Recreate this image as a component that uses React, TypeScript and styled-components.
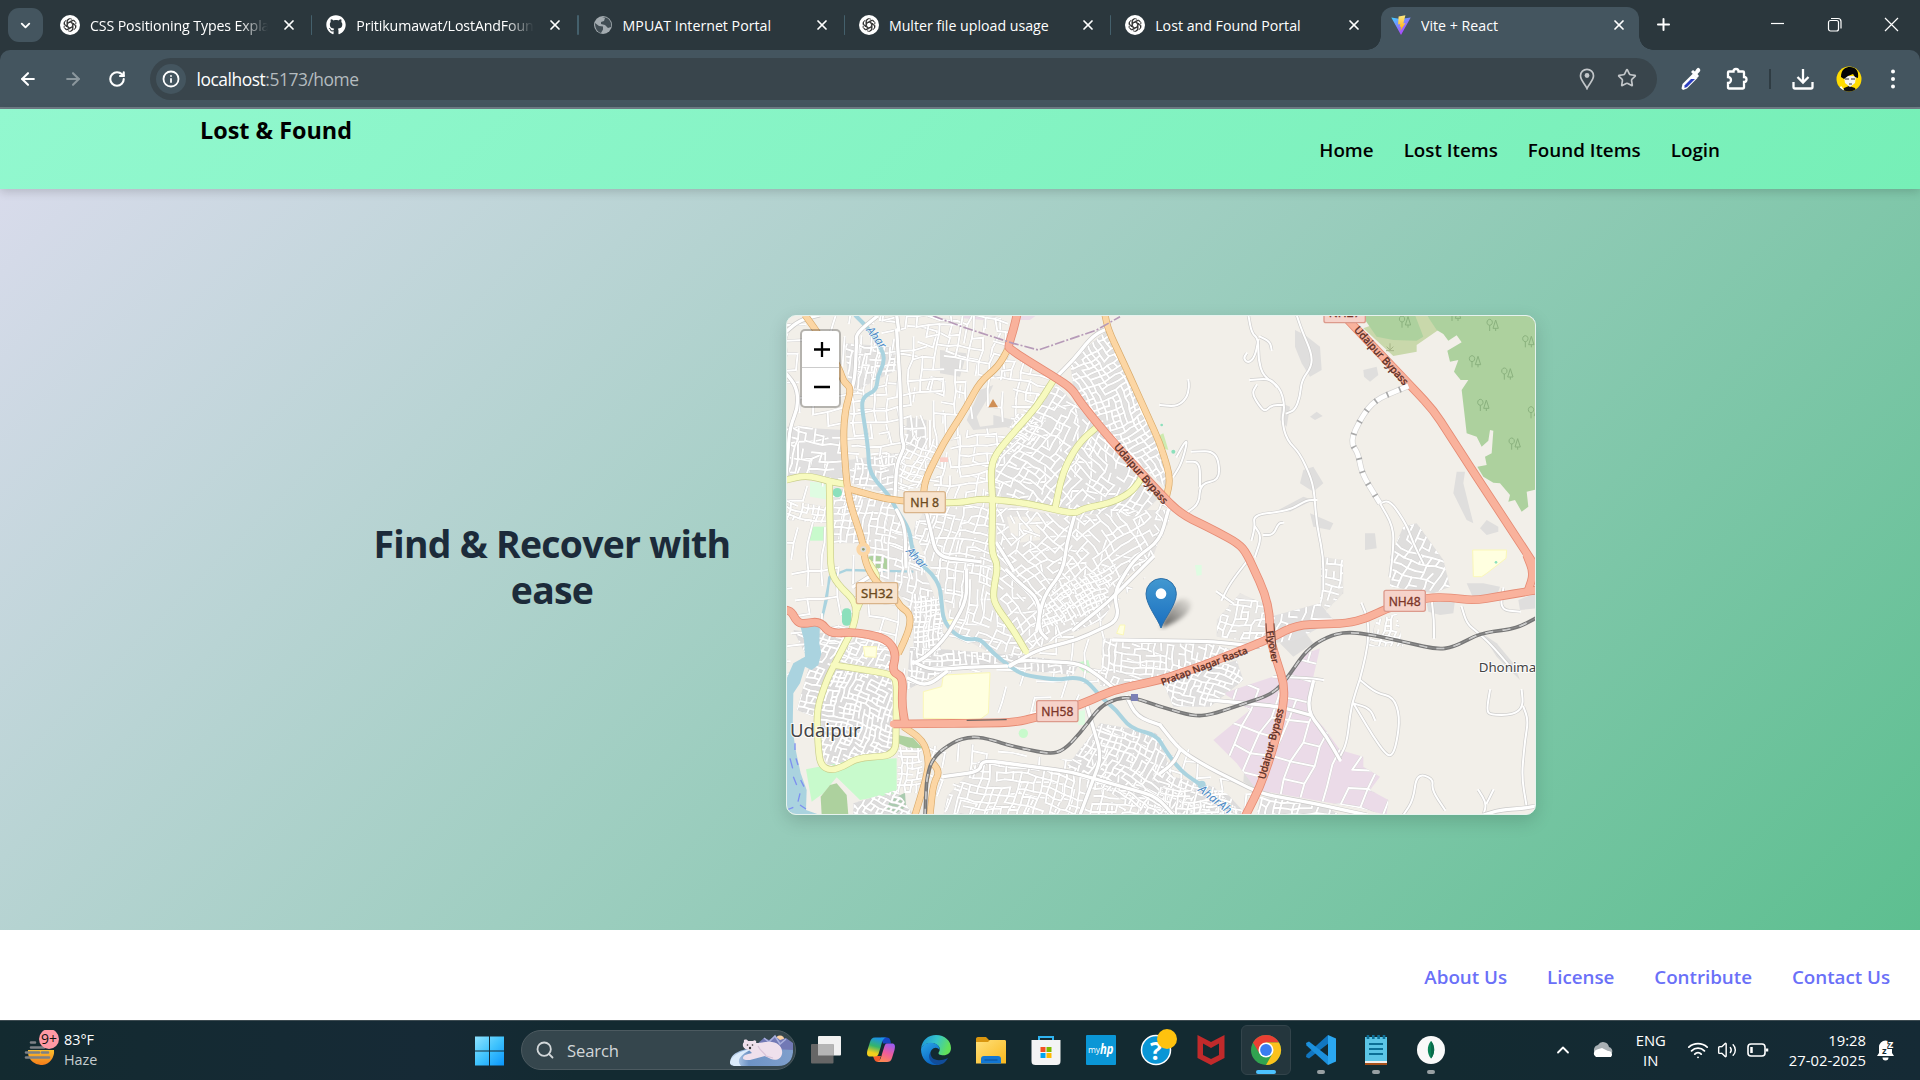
import React from "react";
import styled, { createGlobalStyle } from "styled-components";
import { FaGithub } from "react-icons/fa";
import {
  ArrowLeft, ArrowRight, RotateCw, Info, ChevronDown, ChevronUp, X, Plus, Star, Search, Wifi, Volume2,
} from "lucide-react";

const ui = `"Open Sans", "Noto Sans", sans-serif`;

const GlobalStyle = createGlobalStyle`
  * { box-sizing: border-box; }
  body { margin: 0; font-family: ${ui}; overflow: hidden; background: #fff; }
`;

const Screen = styled.div`
  width: 1920px;
  height: 1080px;
  display: flex;
  flex-direction: column;
  overflow: hidden;
`;

/* ---------- Browser chrome ---------- */

const TabStrip = styled.div`
  height: 50px;
  flex: none;
  background: #2b373d;
  display: flex;
  padding-left: 8px;
  color: #fff;
`;

const TabSearch = styled.div`
  width: 35px;
  height: 34px;
  margin: 8px 3px 0 0;
  border-radius: 11px;
  background: #44555f;
  display: grid;
  place-items: center;
`;

const TabBox = styled.div<{ $active?: boolean }>`
  position: relative;
  width: ${(p) => (p.$active ? 258 : 266.3)}px;
  margin: ${(p) => (p.$active ? "7px 0 0 3.5px" : "7px 0 0")};
  padding: 0 0 7px ${(p) => (p.$active ? 10 : 14)}px;
  flex: none;
  display: flex;
  align-items: center;
  background: ${(p) => (p.$active ? "#44555f" : "transparent")};
  border-radius: 12px 12px 0 0;
  ${(p) =>
    p.$active &&
    `&::before, &::after {
      content: ""; position: absolute; bottom: 0; width: 14px; height: 14px;
    }
    &::before { left: -14px; background: radial-gradient(circle at 0 0, transparent 13.5px, #44555f 14px); }
    &::after { right: -14px; background: radial-gradient(circle at 100% 0, transparent 13.5px, #44555f 14px); }`}
`;

const TabIcon = styled.div`
  width: 20px;
  height: 20px;
  flex: none;
  display: grid;
`;

const TabTitle = styled.div<{ $fade?: boolean; $narrow?: boolean }>`
  width: ${(p) => (p.$narrow ? 177 : 178)}px;
  flex: none;
  margin-left: 10px;
  font-size: 14.2px;
  letter-spacing: ${(p) => (p.$fade ? -0.12 : 0)}px;
  white-space: nowrap;
  overflow: hidden;
  ${(p) => p.$fade && "mask-image: linear-gradient(90deg, #000 84%, transparent);"}
`;

const TabClose = styled.div`
  width: 16px;
  height: 16px;
  flex: none;
  margin-left: 13px;
  display: grid;
`;

const TabDivider = styled.div<{ $hidden?: boolean }>`
  width: 2.5px;
  height: 20px;
  margin-left: 14px;
  border-radius: 2px;
  background: ${(p) => (p.$hidden ? "transparent" : "#44606c")};
`;

const NewTab = styled.div`
  width: 20px;
  margin: 15px 0 0 15.5px;
`;

const WindowButtons = styled.div`
  display: flex;
  gap: 40px;
  margin: 16px 0 0 95px;
  & svg { width: 17px; height: 17px; }
`;

const Toolbar = styled.div`
  height: 59px;
  flex: none;
  background: #44555f;
  border-bottom: 2px solid #707c86;
  border-radius: 10px 10px 0 0;
  display: flex;
  align-items: center;
  color: #fff;
`;

const ToolbarWrap = styled.div`
  background: #2b373d;
  flex: none;
`;

const NavButtons = styled.div`
  width: 150px;
  display: flex;
  align-items: center;
  gap: 25px;
  padding-left: 17.5px;
`;

const Omnibox = styled.div`
  width: 1507px;
  height: 42px;
  border-radius: 21px;
  background: #39454c;
  display: flex;
  align-items: center;
  padding: 0 20px 0 6px;
`;

const InfoBadge = styled.div`
  width: 30px;
  height: 30px;
  border-radius: 50%;
  background: #44555f;
  display: grid;
  place-items: center;
  margin-right: 10.5px;
`;

const Url = styled.div`
  flex: 1;
  font-size: 17.4px;
  letter-spacing: -0.45px;
  color: #b4bbbf;
  & b { font-weight: 400; color: #fff; }
`;

const OmniIcons = styled.div`
  display: flex;
  gap: 20px;
  color: #c2c6c9;
`;

const ToolIcons = styled.div`
  flex: 1;
  display: flex;
  align-items: center;
  padding-left: 21.5px;
`;

const ToolDivider = styled.div`
  width: 2px;
  height: 20px;
  margin: 0 21px 0 20px;
  background: #2f3c43;
`;

/* ---------- Page ---------- */

const Header = styled.header`
  position: relative;
  z-index: 1;
  height: 80px;
  flex: none;
  padding: 0 200px;
  display: flex;
  justify-content: space-between;
  background: linear-gradient(135deg, #92f8cf, #76efb7);
  box-shadow: 0 3px 9px rgba(0, 0, 0, 0.16);
  color: #000;
`;

const Brand = styled.h1`
  margin: 5px 0 0;
  font-size: 23.4px;
  line-height: 32px;
  font-weight: 700;
`;

const Nav = styled.nav`
  display: flex;
  align-items: center;
  gap: 30px;
  padding-top: 1px;
`;

const NavLink = styled.a`
  font-size: 18.8px;
  font-weight: 600;
`;

const Hero = styled.main`
  height: 741px;
  flex: none;
  padding: 11px 384px 0 354px;
  display: flex;
  align-items: center;
  justify-content: space-between;
  background: linear-gradient(135deg, #d8dbeb, #5dbf90);
`;

const Headline = styled.h2`
  width: 396px;
  margin: 4px 0 0;
  text-align: center;
  font-size: 37.4px;
  line-height: 46px;
  font-weight: 700;
  color: #1c2b3a;
  letter-spacing: -0.75px;
`;

const MapCard = styled.div`
  position: relative;
  width: 750px;
  height: 500px;
  border: 1px solid #e6f3ee;
  border-radius: 10px;
  overflow: hidden;
  background: #f2efe9;
`;

const MapShadow = styled.div`
  border-radius: 10px;
  box-shadow: 0 6px 18px rgba(0, 0, 0, 0.15);
`;

const MapSvg = styled.svg`
  display: block;
  width: 750px;
  height: 500px;
  margin: -1px;
  font-family: "Noto Sans", "Open Sans", sans-serif;
`;

const ZoomControl = styled.div`
  position: absolute;
  left: 13px;
  top: 13px;
  width: 41px;
  border: 2px solid rgba(0, 0, 0, 0.25);
  border-radius: 5px;
  background-clip: padding-box;
  background-color: #fff;
`;

const ZoomButton = styled.div<{ $last?: boolean }>`
  height: ${(p) => (p.$last ? 38 : 37)}px;
  display: grid;
  place-items: center;
  padding-left: 2px;
  border-bottom: ${(p) => (p.$last ? "none" : "1px solid #ccc")};
`;

const Footer = styled.footer`
  height: 90px;
  flex: none;
  padding: 4px 30px 0;
  display: flex;
  align-items: center;
  justify-content: flex-end;
  gap: 40px;
  background: #fff;
`;

const FooterLink = styled.a`
  font-size: 18.8px;
  font-weight: 600;
  letter-spacing: -0.03px;
  color: #6a70f8;
`;

/* ---------- Taskbar ---------- */

const Taskbar = styled.div`
  height: 60px;
  flex: none;
  display: flex;
  align-items: center;
  padding-bottom: 2px;
  color: #fff;
  border-top: 1px solid #3d4b51;
  background: linear-gradient(90deg, #132a30, #162a36 22%, #132a31 30%, #132a31 75%, #152a35);
`;

const Weather = styled.div`
  width: 473px;
  display: flex;
  padding-left: 24px;
  gap: 4px;
  font-size: 14.4px;
  line-height: 20px;
`;

const Dim = styled.div`
  color: #c5cccf;
`;

const SearchPill = styled.div`
  width: 275px;
  height: 40px;
  flex: none;
  margin: 0 5px 0 16px;
  border-radius: 20px;
  border: 1px solid #4c5a60;
  background: #35464d;
  display: flex;
  align-items: center;
  padding-left: 13px;
  gap: 12px;
  font-size: 16.6px;
  color: #d2d7d9;
  overflow: hidden;
`;

const SearchText = styled.div`
  flex: 1;
  padding-top: 1px;
  letter-spacing: -0.1px;
`;

const AppSlot = styled.div<{ $open?: boolean }>`
  width: 50px;
  height: 50px;
  margin-right: 5px;
  display: grid;
  justify-items: center;
  align-content: end;
  border-radius: 6px;
  background: ${(p) => (p.$open ? "#24363d" : "transparent")};
  border: 1px solid ${(p) => (p.$open ? "#33444b" : "transparent")};
`;

const AppIcon = styled.svg`
  width: 40px;
  height: 40px;
  overflow: visible;
`;

const Indicator = styled.div<{ $kind?: "active" | "idle" }>`
  width: ${(p) => (p.$kind === "active" ? 20 : 8)}px;
  height: 4px;
  border-radius: 2px;
  background: ${(p) => (p.$kind === "active" ? "#4cc2ff" : p.$kind === "idle" ? "#98a0a3" : "transparent")};
`;

const Tray = styled.div`
  flex: 1;
  display: flex;
  align-items: center;
  justify-content: flex-end;
  padding-right: 24px;
`;

const TrayText = styled.div<{ $align: string; $m: string }>`
  font-size: 14.8px;
  line-height: 20px;
  text-align: ${(p) => p.$align};
  margin: ${(p) => p.$m};
`;

/* ---------- Favicons ---------- */

const OpenAiIcon = () => (
  <svg viewBox="0 0 20 20">
    <circle cx="10" cy="10" r="10" fill="#fff" />
    {[0, 60, 120, 180, 240, 300].map((a) => (
      <path key={a} d="M7.6 10.8V6.1a2.6 2.6 0 0 1 4.6-1.5M7.6 7.9l4-2.3a2.7 2.7 0 0 1 3.6 1" fill="none" stroke="#111" strokeWidth=".75" transform={`rotate(${a} 10 10)`} />
    ))}
  </svg>
);

const GlobeIcon = () => (
  <svg viewBox="0 0 20 20">
    <circle cx="10" cy="10" r="9" fill="#a3abb0" />
    <path d="M2 8l4 3 4 .5v3l-2 3.500C4 17 2 13 2 8zM9 2l3 1-1 3-3 1v2l4 1 3 3 3-1c1-5-2-10-9-10z" fill="#414d54" />
  </svg>
);

const ViteIcon = () => (
  <svg viewBox="0 0 20 20">
    <defs>
      <linearGradient id="vA" x1="0" y1="0" x2=".7" y2="1"><stop stopColor="#41d1ff" /><stop offset="1" stopColor="#bd34fe" /></linearGradient>
      <linearGradient id="vB" x1=".5" y1="0" x2=".5" y2="1"><stop stopColor="#ffea83" /><stop offset="1" stopColor="#ffa800" /></linearGradient>
    </defs>
    <path d="M.3 2.5l9.2 1.6 10.2-1.6L10 20z" fill="url(#vA)" />
    <path d="M14.4.2L7.6 1.5 7.1 9.4l2.2-.4-.6 3.1 1.5-.4-.9 4.4 5.2-8.1-2.2.4z" fill="url(#vB)" />
  </svg>
);

const tabs = [
  { title: "CSS Positioning Types Explained", icon: <OpenAiIcon />, fade: true },
  { title: "Pritikumawat/LostAndFound", icon: <FaGithub size={20} />, fade: true },
  { title: "MPUAT Internet Portal", icon: <GlobeIcon /> },
  { title: "Multer file upload usage", icon: <OpenAiIcon /> },
  { title: "Lost and Found Portal", icon: <OpenAiIcon /> },
  { title: "Vite + React", icon: <ViteIcon />, active: true },
];

/* ---------- Map ---------- */

type Pt = [number, number];

const parse = (s: string): Pt[] => s.trim().split(/\s+/).map((p) => p.split(",").map(Number) as Pt);

const smooth = (s: string) => {
  const p = parse(s);
  let d = `M${p[0]}`;
  for (let i = 1; i < p.length - 1; i++) {
    const [ax, ay] = p[i - 1], [bx, by] = p[i], [cx, cy] = p[i + 1];
    const la = Math.min(0.5, 40 / Math.hypot(bx - ax, by - ay));
    const lc = Math.min(0.5, 40 / Math.hypot(cx - bx, cy - by));
    d += `L${bx + (ax - bx) * la},${by + (ay - by) * la}Q${bx},${by} ${bx + (cx - bx) * lc},${by + (cy - by) * lc}`;
  }
  return d + `L${p[p.length - 1]}`;
};

const random = (seed: number) => () => {
  seed = (seed * 1664525 + 1013904223) % 4294967296;
  return seed / 4294967296;
};

interface District { area: string; angle: number; gap: number; fill?: string; density?: number }

const grey = "#e2e1e0";

const districts: District[] = [
  { area: "18,15 690,15 690,110 870,240 1180,600 1100,800 980,900 980,960 1180,1010 1180,1100 900,1180 780,1215 640,1230 640,1085 430,1090 380,1100 18,1100", angle: 6, gap: 44, density: 0.42 },
  { area: "430,1310 560,1300 800,1345 900,1350 960,1240 1200,1300 1420,1450 1400,1515 440,1515", angle: 14, gap: 40, density: 0.45 },
  { area: "225,90 300,15 690,15 685,110 655,165 600,210 555,290 480,400 430,540 220,520 205,240", angle: 1, gap: 34, density: 0.6 },
  { area: "195,100 340,110 350,180 230,240 205,230", angle: 6, gap: 19, density: 0.7, fill: grey },
  { area: "205,450 345,430 350,560 215,520", angle: 2, gap: 20, density: 0.7, fill: grey },
  { area: "370,370 480,390 430,530 350,545", angle: 24, gap: 20, density: 0.7 },
  { area: "690,120 830,215 640,440 630,570 450,560 500,400 560,360 690,350 700,230 640,200", angle: 4, gap: 28, density: 0.62 },
  { area: "710,310 800,320 760,400 650,450 680,390", angle: 42, gap: 15, density: 0.85, fill: "#eceae7" },
  { area: "830,225 950,350 1140,560 1080,620 880,610 640,570 650,440", angle: 35, gap: 22, density: 0.66, fill: grey },
  { area: "870,150 985,60 1150,420 1165,540 1010,400 880,235", angle: 63, gap: 18, density: 0.8, fill: grey },
  { area: "18,350 190,360 200,520 150,510 90,495 18,505", angle: 10, gap: 26, density: 0.55, fill: "#e0dfdf" },
  { area: "18,570 140,590 140,640 18,630", angle: 12, gap: 17, density: 0.85 },
  { area: "160,530 340,570 400,700 480,900 480,960 380,960 385,880 290,790 250,700 160,700", angle: 8, gap: 21, density: 0.7, fill: "#e6e4e2" },
  { area: "400,850 485,870 490,930 480,1030 400,1020", angle: 0, gap: 15, density: 0.9, fill: grey },
  { area: "440,590 640,590 635,730 635,880 740,1030 670,1050 520,970 490,860 400,660", angle: 12, gap: 24, density: 0.68, fill: "#e9e7e4" },
  { area: "650,590 880,620 1080,600 1165,600 1120,740 1040,800 970,930 750,1020 650,870", angle: 52, gap: 24, density: 0.66, fill: "#e6e4e2" },
  { area: "680,620 780,620 780,690 700,700", angle: 4, gap: 60, fill: "#f2efe9", density: 0.4 },
  { area: "820,830 1010,760 970,900 780,960", angle: 61, gap: 15, density: 0.85 },
  { area: "40,960 210,980 150,1090 100,1220 50,1200 90,1060", angle: 25, gap: 18, fill: "#dddcdc" },
  { area: "165,1070 335,1095 345,1330 230,1340 150,1375 120,1320 115,1200", angle: 18, gap: 15, density: 0.72, fill: "#dddcdc" },
  { area: "225,980 340,1000 330,1080 175,1055", angle: 20, gap: 17, fill: grey },
  { area: "390,1010 640,1030 740,1040 900,1055 880,1095 720,1080 660,1060 500,1080 380,1140", angle: 4, gap: 18, fill: "#dddcdc" },
  { area: "355,1310 425,1315 430,1450 350,1450", angle: 0, gap: 17, density: 0.85 },
  { area: "220,1480 350,1440 400,1515 220,1515", angle: 30, gap: 16, fill: "#dddcdc" },
  { area: "500,1460 600,1350 900,1385 1130,1470 1180,1515 490,1515", angle: 12, gap: 23, density: 0.78, fill: "#e9e7e4" },
  { area: "860,1370 960,1240 1130,1270 1180,1400 1300,1430 1390,1515 1100,1515", angle: 28, gap: 19, density: 0.72, fill: "#dfdede" },
  { area: "970,985 1250,990 1400,1030 1200,1100 960,1130", angle: 12, gap: 19, density: 0.7, fill: "#e4e2e0" },
  { area: "1150,1120 1370,1050 1390,1110 1290,1190 1180,1190", angle: 22, gap: 17, density: 0.75, fill: "#e0dfdf" },
  { area: "1310,930 1380,850 1450,880 1460,970 1440,1000 1310,980", angle: 10, gap: 20, fill: "#e9e7e4" },
  { area: "1470,920 1620,880 1660,930 1550,990 1480,1000", angle: 10, gap: 22, density: 0.5, fill: "#e0dfdf" },
  { area: "1625,740 1690,750 1690,850 1640,900 1620,880", angle: 10, gap: 21, density: 0.5, fill: "#e7e5e2" },
  { area: "1870,650 1910,640 1990,750 2010,830 1960,850 1830,830 1830,740", angle: 25, gap: 24, density: 0.65, fill: "#dfdedd" },
  { area: "1790,930 1850,910 1870,1010 1760,1010", angle: 10, gap: 17, density: 0.8 },
  { area: "1620,1015 1600,1100 1590,1210 1630,1250 1680,1320 1750,1340 1750,1370 1800,1400 1770,1440 1825,1470 1820,1515 1740,1495 1430,1440 1370,1360 1300,1290 1410,1200 1330,1150 1480,1100 1515,1110 1580,1030", angle: 17, gap: 62, density: 0.8, fill: "#ebdbe8" },
  { area: "1130,1430 1340,1450 1400,1515 1180,1515", angle: 5, gap: 18, fill: "#dddcdc" },
  { area: "1440,1460 1620,1480 1680,1515 1430,1515", angle: 6, gap: 19, density: 0.7, fill: "#e0dfdf" },
];

const streetGrid = ({ area, angle, gap, density = 0.68 }: District, seed: number) => {
  const pts = parse(area);
  const xs = pts.map((p) => p[0]), ys = pts.map((p) => p[1]);
  const cx = (Math.min(...xs) + Math.max(...xs)) / 2, cy = (Math.min(...ys) + Math.max(...ys)) / 2;
  const r = Math.hypot(Math.max(...xs) - cx, Math.max(...ys) - cy);
  const n = Math.ceil((2 * r) / gap);
  const rnd = random(seed * 977 + 31);
  const t = (angle * Math.PI) / 180;
  const grid: Pt[][] = [];
  for (let i = 0; i <= n; i++) {
    grid.push([]);
    for (let j = 0; j <= n; j++) {
      const u = -r + i * gap + (rnd() - 0.5) * gap * 0.3 + Math.sin(j * 0.5) * gap * 0.3;
      const v = -r + j * gap + (rnd() - 0.5) * gap * 0.3 + Math.sin(i * 0.4) * gap * 0.5;
      grid[i].push([Math.round(cx + u * Math.cos(t) - v * Math.sin(t)), Math.round(cy + u * Math.sin(t) + v * Math.cos(t))]);
    }
  }
  let d = "";
  for (let i = 0; i < n; i++)
    for (let j = 0; j < n; j++) {
      const wave = Math.sin(i * 0.55 + seed) * Math.cos(j * 0.45) * 0.28;
      if (rnd() < density + wave) d += `M${grid[i][j]}L${grid[i + 1][j]}`;
      if (rnd() < density - wave) d += `M${grid[i][j]}L${grid[i][j + 1]}`;
    }
  return d;
};

const buildUp = [
  "1545,60 1575,75 1620,110 1625,180 1590,200 1565,160 1545,110", "1750,180 1790,170 1795,195 1770,215 1752,200", "1590,320 1610,305 1628,318 1605,330",
  "1505,280 1530,290 1520,350 1500,330", "1570,480 1600,470 1630,520 1600,545 1560,520", "1495,600 1570,560 1600,570 1530,605", "1590,610 1660,640 1650,660 1600,650",
  "2030,485 2055,485 2050,520 2080,640 2060,630 2020,550", "2120,630 2155,650 2155,665 2120,675 2100,655", "1755,670 1785,670 1790,715 1755,720", "1940,880 2025,870 2020,910 1980,915 1945,905",
  "2060,820 2110,820 2160,830 2150,860 2080,865", "2215,870 2268,850 2268,895 2220,900", "2105,970 2150,1000 2200,1060 2220,1110 2150,1040",
  "560,330 600,240 640,225 620,270 590,320 600,350 640,345 640,315 700,330 690,350 580,360",
  "70,400 190,420 190,480 80,480", "920,420 970,400 960,430 930,440", "1500,1000 1570,960 1600,1000 1540,1040", "1395,1350 1440,1340 1430,1440 1390,1415",
  "380,320 440,330 440,420 380,420", "480,120 560,130 540,200 480,190",
];

const greens: [string, string][] = [
  ["1750,55 1860,15 1940,15 1975,60 1910,105 1910,125 1840,138", "#c9d8ab"],
  ["1745,15 1905,15 1930,80 1910,92 1840,90 1790,80", "#add19e"],
  ["1940,15 1970,60 1990,72 2005,92 2030,76 2045,97 2002,122 2010,155 2035,150 2022,185 2042,210 2065,210 2045,240 2052,300 2060,370 2090,380 2105,410 2125,392 2130,360 2140,362 2135,430 2115,440 2120,465 2092,470 2110,500 2140,518 2160,520 2190,555 2185,575 2205,570 2225,605 2245,590 2240,545 2270,538 2270,15", "#add19e"],
  ["90,515 150,520 150,570 90,560", "#dffce2"], ["90,650 138,650 138,692 90,692", "#c8facc"], ["265,740 300,732 330,755 320,780 270,780", "#add19e"],
  ["78,1378 210,1352 350,1345 350,1450 240,1470 170,1402 130,1450 95,1475", "#c8facc"],
  ["150,1425 170,1420 200,1455 205,1515 125,1515 122,1460", "#add19e"], ["355,1275 400,1285 428,1315 390,1315 355,1300", "#add19e"],
  ["330,1470 375,1448 378,1490 340,1515 320,1500", "#aacbaf"], ["885,1060 925,1050 935,1090 910,1085", "#c8facc"],
  ["1130,380 1150,370 1165,420 1135,410", "#cdebb0"], ["890,1205 915,1200 915,1245 895,1245", "#dffce2"], ["1245,765 1265,765 1265,795 1250,797", "#dffce2"],
];

const sands = [
  "430,1145 485,1130 490,1095 630,1088 625,1210 600,1228 430,1225", "2078,720 2180,720 2178,745 2120,790 2105,800 2080,800", "495,932 520,930 528,940 510,955",
  "1020,945 1035,945 1030,975 1010,970", "250,1010 290,1010 288,1042 255,1040",
];

const river = "225,15 270,60 310,125 312,160 292,200 290,240 250,260 245,290 255,350 265,420 268,490 330,560 350,600 390,660 395,720 430,770 455,790 480,830 485,880 490,930 520,970 560,990 600,985 640,1030 690,1070 730,1095 830,1110 880,1102 920,1110 960,1160 1010,1200 1050,1255 1130,1275 1155,1320 1200,1380 1240,1410 1265,1425";

const lanes = [
  "1405,15 1415,70 1435,85 1435,150 1450,200 1500,230 1515,290 1505,330 1520,390 1560,430 1600,520 1610,640 1630,740 1630,840",
  "1550,15 1565,60 1595,130 1595,170 1565,210 1560,260 1545,300 1520,310", "1435,90 1425,140 1405,160 1390,145 1400,130",
  "1440,80 1470,95 1475,120", "1410,210 1470,205 1490,230", "1430,225 1415,250 1440,290 1455,305 1475,285 1510,285", "1610,570 1580,570 1540,595 1500,605 1420,615 1425,650 1415,690",
  "1425,650 1445,680 1425,740", "1450,675 1480,675 1495,640 1510,638", "1800,580 1840,650 1840,720 1830,800", "1800,580 1830,570 1880,645 1900,700 1930,760", "1140,285 1190,290 1220,265 1228,230 1225,210",
  "1180,500 1205,460 1222,395 1215,395 1190,440", "1235,425 1310,422 1322,510 1260,520 1258,580 1225,605", "1220,455 1260,455 1260,530", "1400,755 1350,820 1325,870", "1310,845 1360,880",
  "1745,880 1765,930 1765,1000 1740,1110 1715,1180 1700,1300 1680,1340", "1740,1110 1790,1150 1840,1160 1860,1220 1850,1300 1835,1340 1815,1330 1780,1280 1720,1180", "1720,1180 1770,1195 1785,1230",
  "2045,890 2060,940 2090,965 2130,1000 2190,1070", "2130,1140 2120,1200 2130,1215 2200,1215 2230,1190 2225,1140", "2230,1190 2245,1230 2235,1290 2225,1400 2240,1490",
  "1870,1515 1900,1470 1910,1390 1960,1405 1955,1440 1995,1500", "2095,1440 2120,1480 2110,1515", "2120,1480 2140,1440", "1480,1100 1600,1105 1630,1110", "1955,870 1962,930 1962,985", "2170,835 2160,900 2220,905",
];

const streets = [
  "18,65 60,30 120,15", "230,100 228,70 290,20", "230,90 225,200 215,240", "18,190 50,230 55,290 30,350 18,500", "350,60 360,220 365,390 375,410 350,460 345,560", "440,610 470,740 600,755",
  "350,600 375,650 378,770", "350,15 356,60", "700,780 650,700", "820,210 880,150 940,75 985,55", "885,612 860,700 850,780 790,860 770,960", "1165,600 1140,690 1060,750 1000,850 1020,930 890,990 770,1020 690,1068",
  "400,1055 450,1080 560,1072 680,1068", "560,780 560,870 500,980 440,1040 400,1060", "680,780 720,820 780,870 775,960 800,985", "690,1065 720,1050 900,1060 960,1100 1000,1135", "385,1105 440,1130 500,1085",
  "1000,990 1300,995 1440,1010", "920,1185 965,1340 900,1515", "1040,1160 1070,1220 1140,1245", "490,1400 600,1385 605,1350 870,1385 1130,1460 1180,1515", "1140,1245 1200,1320 1280,1370 1440,1450 1600,1480 1760,1515",
  "2110,1515 2160,1500 2230,1495 2270,1488", "1200,1320 1180,1360 1140,1390", "1120,740 980,880 880,960", "300,780 220,830", "1600,1115 1580,1200 1640,1280 1680,1350", "1290,1170 1500,1190 1590,1215",
];

const secondary = [
  "822,208 770,290 690,380 645,435 632,480 638,570 635,730 655,765 640,840 642,880 700,960 738,1025",
  "495,578 550,577 590,568 640,568 740,580 885,612 910,595 990,580 1050,550 1078,515 1085,500", "952,350 900,395 860,460 840,520 825,597",
  "18,510 80,495 150,515 200,523", "148,520 152,780 170,820 232,880 222,950 165,1060 140,1110 110,1200 115,1320 122,1365 150,1382 190,1370 230,1345 347,1335 350,1110 330,1092 160,1065", "230,900 242,870 300,810 265,755",
];

const primary = [
  "75,15 125,85 180,180 190,215 215,235 195,300 190,380 200,520 210,580 250,700 255,760 290,820 345,860 360,890 390,910 390,950 370,1000 355,1030",
  "200,535 320,568 400,575", "430,560 435,510 490,400 560,290 600,215 655,170 685,115", "975,15 985,60 1050,200 1140,400 1172,505 1158,565",
  "370,1250 430,1290 447,1350 440,1400 405,1515", "450,1350 480,1385 460,1420 450,1515",
];

const trunk = [
  "712,10 700,60 685,108 688,116 740,150 830,205 875,235 900,275 960,350 1020,420 1140,550 1200,610 1310,665 1375,700 1400,730 1455,850 1470,920 1468,970 1480,1020 1515,1130 1505,1220 1475,1330 1440,1430 1395,1520",
  "18,900 35,905 50,935 70,942 120,933 150,972 220,965 320,985 350,1030 335,1085 370,1100 365,1180 375,1240", "340,1242 560,1240 700,1238 780,1220 900,1185 1000,1140 1140,1110 1260,1070 1460,990 1550,945 1700,940 1760,925 1820,895 1940,863 2010,862 2080,872 2240,845 2270,840",
  "2240,735 2262,790 2245,840", "1690,15 1885,220 1960,300 2070,470 2270,775",
];

const railway = "435,1520 440,1400 460,1340 520,1295 570,1280 620,1285 700,1310 810,1332 850,1322 900,1270 960,1190 1010,1165 1060,1162 1140,1190 1240,1218 1290,1215 1380,1185 1470,1155 1510,1120 1580,1020 1640,980 1700,965 1780,975 1970,1018 2020,1012 2100,970 2210,955 2272,922";

const tunnel = "1885,228 1785,270 1745,320 1710,395 1735,430 1745,490 1800,580";

const trees: Pt[] = [[1875, 38], [2138, 48], [2245, 97], [2085, 157], [2182, 194], [2110, 288], [2262, 310], [2204, 404], [2025, 18]];

const shields = [
  { x: 372, y: 545, text: "NH 8", fill: "#f7e3cd", stroke: "#d9b48a", ink: "#6b4a1c" },
  { x: 229, y: 818, text: "SH32", fill: "#f7e3cd", stroke: "#d9b48a", ink: "#6b4a1c" },
  { x: 770, y: 1172, text: "NH58", fill: "#f6d2ca", stroke: "#dc9a8c", ink: "#7c3529" },
  { x: 1812, y: 841, text: "NH48", fill: "#f6d2ca", stroke: "#dc9a8c", ink: "#7c3529" },
  { x: 1632, y: -25, text: "NH27", fill: "#f6d2ca", stroke: "#dc9a8c", ink: "#7c3529" },
];

const roadLabels = [
  { x: 1075, y: 498, a: 49, s: 31, w: 228, t: "Udaipur Bypass" },
  { x: 1796, y: 144, a: 48, s: 31, w: 225, t: "Udaipur Bypass" },
  { x: 1276, y: 1078, a: -21, s: 29, w: 276, t: "Pratap Nagar Rasta" },
  { x: 1468, y: 1012, a: 80, s: 28, w: 98, t: "Flyover" },
  { x: 1483, y: 1304, a: -75, s: 31, w: 218, t: "Udaipur Bypass" },
];

const waterLabels = [
  { x: 280, y: 90, a: 52, w: 74, t: "Ahar" },
  { x: 402, y: 752, a: 47, w: 74, t: "Ahar" },
  { x: 1298, y: 1478, a: 38, w: 116, t: "AharAh" },
];

const Lines = ({ list, casing, color, width, edge }: { list: string[]; casing: string; color: string; width: number; edge: number }) => (
  <g fill="none" strokeLinejoin="round" strokeLinecap="butt">
    {list.map((l) => <path key={l} d={smooth(l)} stroke={casing} strokeWidth={width + edge} />)}
    {list.map((l) => <path key={l} d={smooth(l)} stroke={color} strokeWidth={width} strokeLinecap="round" />)}
  </g>
);

const CityMap = () => (
  <MapSvg viewBox="18 15 2250 1500">
    <defs>
      {districts.map((d, i) => <clipPath key={i} id={`d${i}`}><polygon points={d.area} /></clipPath>)}
      <linearGradient id="pin" x1="0" y1="0" x2="0" y2="1"><stop stopColor="#4298d0" /><stop offset="1" stopColor="#1a6fc0" /></linearGradient>
      <linearGradient id="pinShadow" x1="0" y1="1" x2=".9" y2="0"><stop stopColor="#000" stopOpacity=".65" /><stop offset="1" stopColor="#000" stopOpacity="0.05" /></linearGradient>
      <filter id="soft"><feGaussianBlur stdDeviation="6" /></filter>
    </defs>
    <rect width="2300" height="1540" fill="#f2efe9" />
    <path d="M535,15H640L610,30L550,25Z M715,15H770L750,30H715Z" fill="#ebdbe8" />
    {buildUp.map((p) => <polygon key={p} points={p} fill="#dfdedd" />)}
    {districts.map((d, i) => d.fill && <polygon key={i} points={d.area} fill={d.fill} />)}
    {greens.map(([p, c]) => <polygon key={p} points={p} fill={c} />)}
    <path d="M148,800L140,870L125,930L150,800L200,780L400,785" fill="none" stroke="#aad3df" strokeWidth="7" />
    <g fill="none">
      {districts.map((d, i) => {
        const path = streetGrid(d, i + 3);
        return (
          <g key={i} clipPath={`url(#d${i})`}>
            <path d={path} stroke="#d3d2d1" strokeWidth="8.4" />
            <path d={path} stroke="#fff" strokeWidth="5.8" strokeLinecap="round" />
          </g>
        );
      })}
    </g>
    {sands.map((p) => <polygon key={p} points={p} fill="#ffffe0" stroke="#fbf8b8" strokeWidth="3" />)}
    <path d="M60,945L120,938L118,1000L124,1030L115,1065L95,1080L75,1070L60,1120L40,1150L38,1250L45,1310L62,1390L80,1440L78,1500L120,1515H18V1110L40,1060L75,1040L72,990Z" fill="#aad3df" />
    <path d="M45,1300v20M30,1345l8,30M48,1345l6,20M40,1400l10,25M62,1410l10,20M60,1450l-6,25M20,1500l20,-8M60,1485l18,12" stroke="#7d8ff0" strokeWidth="4" />
    <path d={smooth(river)} fill="none" stroke="#aad3df" strokeWidth="12" strokeLinejoin="round" />
    <circle cx="1265" cy="1424" r="12" fill="#aad3df" />
    <g fill="#8ce0bc"><circle cx="172" cy="548" r="14" /><rect x="186" y="895" width="28" height="52" rx="13" /><circle cx="730" cy="1270" r="14" fill="#c8facc" /><circle cx="1145" cy="345" r="4" /><circle cx="1180" cy="425" r="6" /><circle cx="2148" cy="757" r="4" /></g>
    <rect x="480" y="442" width="24" height="14" fill="#fbcfc8" />
    <path d="M625,292l14,-25l15,25z" fill="#d08f55" />
    <Lines list={lanes} casing="#d0cfce" color="#fff" width={6} edge={4} />
    <Lines list={streets} casing="#cbcac9" color="#fff" width={10} edge={4} />
    <Lines list={secondary} casing="#c9ce8c" color="#f7fabf" width={17} edge={4} />
    <Lines list={primary} casing="#d9ab6c" color="#fcd6a4" width={17} edge={4} />
    <circle cx="250" cy="718" r="15" fill="#ddd" stroke="#fcd6a4" strokeWidth="12" /><circle cx="250" cy="718" r="4" fill="#8a9a70" />
    <path d={smooth(railway)} fill="none" stroke="#777" strokeWidth="11" />
    <path d={smooth(railway)} fill="none" stroke="#e4e4e4" strokeWidth="4.500" strokeDasharray="24 28" />
    <path d={smooth(railway)} fill="none" stroke="#a5a5a5" strokeWidth="1.500" />
    <Lines list={trunk} casing="#e58b74" color="#f9b29c" width={21} edge={5} />
    <path d="M560,1231L680,1229" stroke="#555" strokeWidth="3" />
    <path d="M1458,940L1462,1000M1482,940L1488,1020" stroke="#7a4a3d" strokeWidth="3" />
    <path d={smooth(tunnel)} fill="none" stroke="#d2d1d0" strokeWidth="18" />
    <path d={smooth(tunnel)} fill="none" stroke="#fff" strokeWidth="14" />
    <path d={smooth(tunnel)} fill="none" stroke="#a9a9a9" strokeWidth="18" strokeDasharray="5 35" strokeDashoffset="-25" />
    <path d="M460,18L560,55L700,100L775,120L950,60L1020,20" fill="none" stroke="#b69ab8" strokeWidth="5" strokeDasharray="30 6 6 6" />
    <rect x="1053" y="1152" width="21" height="21" fill="#7b80b5" />
    <g fill="none" stroke="#8ab17e" strokeWidth="3">
      {trees.map(([x, y]) => <path key={`${x}`} d={`M${x - 9},${y + 15}v-17m0,0a8,9 0 1 1 .1,0M${x + 9},${y + 15}v-8m-8,0l8,-25l8,25z`} />)}
      <path d="M1830,100v20m-10,-10l10,10l10,-10m-22,12h24" stroke="#a5b486" />
    </g>
    <g fontSize="37" textAnchor="middle">
      {shields.map((s) => (
        <g key={s.text}>
          <rect x={s.x} y={s.y} width="124" height="63" rx="6" fill={s.fill} stroke={s.stroke} strokeWidth="4" />
          <text x={s.x + 62} y={s.y + 46} fill={s.ink} stroke={s.ink} strokeWidth=".9" textLength={s.text === "NH 8" ? 86 : 96} lengthAdjust="spacingAndGlyphs">{s.text}</text>
        </g>
      ))}
    </g>
    <g textAnchor="middle">
      {roadLabels.map((l) => (
        <text key={l.x} transform={`translate(${l.x} ${l.y}) rotate(${l.a})`} fontSize={l.s} textLength={l.w} lengthAdjust="spacingAndGlyphs" fill="#5a2d24" stroke="#5a2d24" strokeWidth="1">{l.t}</text>
      ))}
      {waterLabels.map((l) => (
        <text key={l.x} transform={`translate(${l.x} ${l.y}) rotate(${l.a})`} fontSize="35" fontStyle="italic" textLength={l.w} lengthAdjust="spacingAndGlyphs" fill="#4d8ac4" stroke="#fff" strokeWidth="3" paintOrder="stroke">{l.t}</text>
      ))}
    </g>
    <g fill="#444" stroke="#fff" strokeOpacity=".8" strokeWidth="6" paintOrder="stroke">
      <text x="30" y="1281" fontSize="54" textLength="212" lengthAdjust="spacingAndGlyphs">Udaipur</text>
      <text x="2096" y="1086" fontSize="40">Dhonimagri</text>
    </g>
    <path d="M1143,954C1160,900 1190,855 1225,868C1250,890 1215,930 1143,954Z" fill="url(#pinShadow)" filter="url(#soft)" />
    <path d="M1143,954C1133,925 1098,885 1098,851A45.500,45.500 0 0 1 1189,851C1189,885 1153,925 1143,954Z" fill="url(#pin)" stroke="#2c6fa8" strokeWidth="3" />
    <circle cx="1143" cy="851" r="16" fill="#fff" />
  </MapSvg>
);

/* ---------- Taskbar drawings ---------- */

const WeatherIcon = () => (
  <svg width="36" height="40" viewBox="0 0 36 40">
    <defs><linearGradient id="sun" x1="0" y1="0" x2="0" y2="1"><stop stopColor="#fbc02d" /><stop offset="1" stopColor="#f57c1a" /></linearGradient></defs>
    <path d="M4 20H30A13 13.500 0 0 1 4 23z" fill="url(#sun)" />
    <path d="M7 12.500h4M7 17.500h13M2 22.500h13M18 22.500h6M2 27.500h23" stroke="#7d8186" strokeWidth="2.600" strokeLinecap="round" />
    <circle cx="25" cy="9" r="10" fill="#ff99a4" />
    <text x="25" y="14" fontSize="14" textAnchor="middle" fill="#111">9+</text>
  </svg>
);

const StartIcon = () => (
  <svg width="32" height="32" viewBox="0 0 32 32">
    <defs><linearGradient id="win" x1="0" y1="0" x2="1" y2="1"><stop stopColor="#8fe3ff" /><stop offset=".5" stopColor="#3fc3fd" /><stop offset="1" stopColor="#0a95fb" /></linearGradient></defs>
    <path d="M2 2.500h14v14H2zM17 2.500h14v14H17zM2 17.500h14v14H2zM17 17.500h14v14H17z" fill="url(#win)" />
  </svg>
);

const PolarBear = () => (
  <svg width="67" height="34" viewBox="0 0 67 34">
    <defs><linearGradient id="ice" x1="0" y1="0" x2="1" y2="0"><stop stopColor="#d4e7fb" /><stop offset=".3" stopColor="#6e93c4" /><stop offset="1" stopColor="#7f9fcc" /></linearGradient></defs>
    <circle cx="52" cy="7" r="4.500" fill="#fbd2a6" />
    <path d="M28 12L36 5L41 7L47 3L52 7L58 5L65 10V20H28z" fill="#7279b5" />
    <path d="M36 5l5 4 6-6 5 8 6-5" fill="none" stroke="#a9b0dd" strokeWidth="1.500" />
    <path d="M2 30C2 20 14 16 26 15L65 17C65 27 60 33 50 33H8C4 33 2 32 2 30z" fill="url(#ice)" />
    <path d="M2 30C4 21 15 17 24 16C12 22 8 27 13 33H6z" fill="#dcecfc" />
    <path d="M15 25C15 22 20 21 24 20L21 17C16 17 13 12 16 9C15 6 19 6 20 8H25C27 6 29 8 28 10C34 10 38 8 44 9C52 10 55 16 54 21C53 26 48 28 43 26L37 23L22 27C18 27 15 27 15 25z" fill="#efe0ec" />
    <path d="M30 13C32 18 37 20 38 23L45 25" fill="none" stroke="#d8c3d8" strokeWidth="1.200" />
    <circle cx="19.500" cy="12" r=".8" fill="#333" /><circle cx="24.500" cy="12" r=".8" fill="#333" /><circle cx="22" cy="15" r="1.200" fill="#333" />
  </svg>
);

const apps: { name: string; state?: "active" | "idle"; art: React.ReactNode }[] = [
  { name: "Task view", art: <><rect x="12" y="6" width="23" height="19.500" rx="1" fill="#f1f1f1" /><rect x="5" y="14" width="22.500" height="19.500" rx="1" fill="#666" /><path d="M12 14h15.500v11.500H12z" fill="#b5b5b5" /></> },
  {
    name: "Copilot",
    art: <>
      <defs>
        <linearGradient id="cp1" x1=".5" y1="0" x2=".2" y2="1"><stop stopColor="#1a91e8" /><stop offset=".45" stopColor="#35b56a" /><stop offset=".8" stopColor="#f2cf1d" /></linearGradient>
        <linearGradient id="cp2" x1=".7" y1="0" x2=".3" y2="1"><stop stopColor="#9c5cf0" /><stop offset=".5" stopColor="#ee5c9c" /><stop offset="1" stopColor="#fd8a50" /></linearGradient>
      </defs>
      <path d="M20 7.500h6c3 0 3.500 3 4 6h-8z" fill="#1746c4" /><path d="M12 26h8l-2 6h-1c-3 0-4-3-5-6z" fill="#f25a2c" />
      <path d="M14 7.500H26C22 7.500 21 12 20 16L17.500 24C16.500 26.500 15 26.500 12 26.500H9C6 26.500 5.500 24 6.500 20L9 12C10 9 11 7.500 14 7.500z" fill="url(#cp1)" />
      <path d="M26 32H16C19 31.500 20 28 21 24L23.500 16C24.500 13.500 25.500 13.500 28 13.500H31C34 13.500 34.500 16 33.500 20L31 28C30 31 28.500 32 26 32z" fill="url(#cp2)" />
    </>,
  },
  {
    name: "Edge",
    art: <>
      <defs>
        <linearGradient id="ed1" x1="0" y1="0" x2="1" y2=".3"><stop stopColor="#1a8fd8" /><stop offset=".55" stopColor="#36c5c9" /><stop offset="1" stopColor="#62e05a" /></linearGradient>
        <linearGradient id="ed2" x1="0" y1="0" x2=".5" y2="1"><stop stopColor="#2aa8e8" /><stop offset="1" stopColor="#0a63c0" /></linearGradient>
      </defs>
      <path d="M5 19C6 10 12 5 20 5C29 5 35 11 35 18C35 24 30 26 25 25C22 24.500 22 23 23.500 21C25 16 20 13 15 13C10 13 6 16 5 19z" fill="url(#ed1)" />
      <path d="M5 19C7 14 12 12 17 13C22 14 24 17 23.500 20C20 15 14 19 14 25C14 30 18 34 23 34.500C13 37 5 30 5 19z" fill="url(#ed2)" />
      <path d="M14.500 22C14 29 21 33 32 28C29 33 26 35 21 35C14 33 11 27 14.500 22z" fill="#114d9a" />
    </>,
  },
  {
    name: "File Explorer",
    art: <>
      <defs><linearGradient id="fo" x1="0" y1="0" x2="1" y2="1"><stop stopColor="#ffe07a" /><stop offset="1" stopColor="#f9b81d" /></linearGradient></defs>
      <path d="M5 9c0-1 .5-2 2-2h8l3 3h15c1.500 0 2 1 2 2v5H5z" fill="#d9960f" /><path d="M5 12h12l2-2h14c1.500 0 2 .5 2 2v21.500H5z" fill="url(#fo)" />
      <path d="M10 33.500V29c0-2 1-3 3-3h14c2 0 3 1 3 3v4.500z" fill="#1277d3" /><path d="M13.500 30h13" stroke="#0a4f95" />
    </>,
  },
  {
    name: "Store",
    art: <>
      <path d="M13 13V7h14v6" fill="none" stroke="#2fb4f0" strokeWidth="2" /><path d="M5.500 10h29v21c0 3-1.500 4-4 4h-21c-2.500 0-4-1-4-4z" fill="#f4f4f4" />
      <path d="M14.500 17h5v5h-5z" fill="#f25022" /><path d="M20.500 17h5v5h-5z" fill="#7fba00" /><path d="M14.500 23h5v5h-5z" fill="#00a4ef" /><path d="M20.500 23h5v5h-5z" fill="#ffb900" />
    </>,
  },
  { name: "myHP", art: <><rect x="5" y="5" width="30" height="30" rx="1" fill="#0a96d6" /><text x="7" y="23" fontSize="8.500" fill="#fff">my</text><text x="19" y="24" fontSize="14.500" fontStyle="italic" fontWeight="700" fill="#fff" textLength="13.500" lengthAdjust="spacingAndGlyphs">hp</text></> },
  { name: "HP Support", art: <><circle cx="20" cy="20" r="14.500" fill="#0a96d6" stroke="#fff" strokeWidth="1.500" /><text x="20" y="29.500" fontSize="25" fontWeight="700" textAnchor="middle" fill="#fff">?</text><circle cx="31" cy="9" r="10" fill="#ffc20e" /></> },
  { name: "McAfee", art: <path d="M6.500 5L20 12L33.500 5V28L20 35L6.500 28zM12 13.500V25L20 29L28 25V13.500L20 18z" fill="#c12a2b" fillRule="evenodd" /> },
  {
    name: "Chrome", state: "active",
    art: <>
      <circle cx="20" cy="20" r="15" fill="#31a350" /><path d="M7 12.500A15 15 0 0 1 33 12.500H20L13.500 23.500z" fill="#ea3f33" /><path d="M33 12.500A15 15 0 0 1 20 35L26.500 23.500L20 12.500z" fill="#fcc21c" />
      <circle cx="20" cy="20" r="7.500" fill="#fff" /><circle cx="20" cy="20" r="5.900" fill="#3a7df0" />
    </>,
  },
  { name: "VS Code", state: "idle", art: <><path d="M27 5L5.500 24.500L5 27L8 28.500L28 13z" fill="#1176c0" /><path d="M27 35L5.500 15.500L5 13L8 11.500L28 27z" fill="#1c90dc" /><path d="M27 5L35 8.500V31.500L27 35z" fill="#2ba7f0" /></> },
  {
    name: "Notepad", state: "idle",
    art: <><path d="M9 7h22v25H9z" fill="#5bc5e6" /><path d="M9 31h22v2H9z" fill="#eee" /><path d="M9 33h22v2H9z" fill="#a8501a" /><path d="M13 14h14M13 19h14M13 24h14" stroke="#0b6f96" strokeWidth="2" /><path d="M12 5v4M17.300 5v4M22.600 5v4M28 5v4" stroke="#0f6f96" strokeWidth="2.600" /></>,
  },
  { name: "MongoDB Compass", state: "idle", art: <><circle cx="20" cy="20" r="14" fill="#f9f9f9" /><path d="M20 11C24.500 16 24 24 20 28.500C16 24 15.500 16 20 11z" fill="#0b8357" /><path d="M20 11C24.500 16 24 24 20 28.500z" fill="#0a6b4b" /></> },
];

const DropperIcon = () => (
  <svg width="24" height="26" viewBox="0 0 24 26">
    <path d="M4 24l-1.500-1.500L3.500 18L14 7.500L18.500 12L8 22.500z" fill="#fff" /><path d="M5.500 19.500l6.500-6.500h4L8 21L5.500 22z" fill="#2d3fc0" />
    <path d="M12 6l2-2 2 1.500C18 2 19 1 20.500 2.500S21.500 5.500 18.500 8L20 10l-2 2z" fill="#fff" />
  </svg>
);

const DownloadIcon = () => (
  <svg width="22" height="22" viewBox="0 0 22 22" fill="none" stroke="#fff" strokeWidth="2.300">
    <path d="M11 1v13M5.500 9L11 14.500L16.500 9M1.500 14v5q0 1.500 1.500 1.500h16q1.500 0 1.500-1.500v-5" />
  </svg>
);

const PinIcon = () => (
  <svg width="20" height="22" viewBox="0 0 20 22">
    <path d="M10 20.500C8 15.500 3.500 12.500 3.500 7.800A6.500 6.500 0 0 1 16.500 7.800C16.500 12.500 12 15.500 10 20.500z" fill="none" stroke="currentColor" strokeWidth="1.700" />
    <circle cx="10" cy="7.500" r="2.400" fill="currentColor" />
  </svg>
);

const Avatar = () => (
  <svg width="26" height="26" viewBox="0 0 26 26">
    <clipPath id="av"><circle cx="13" cy="13" r="12.500" /></clipPath>
    <g clipPath="url(#av)">
      <rect width="26" height="26" fill="#ffdb00" /><path d="M6 26l2-4 5-2 6 2 2 5z" fill="#111" /><path d="M8 10h12l-1 7-5 4-5-4z" fill="#f4f4f4" />
      <path d="M5 11C5 3 10 1 14 1C20 1 23 5 22 12L19 11L17 8L12 10L8 13z" fill="#050505" /><path d="M9 13h4M15 13h4M13 18h3" stroke="#333" /><path d="M4 21l3 4" stroke="#fff" strokeWidth="3" />
    </g>
  </svg>
);

export default function App() {
  return (
    <Screen>
      <GlobalStyle />
      <TabStrip>
        <TabSearch><ChevronDown size={15} strokeWidth={3} /></TabSearch>
        {tabs.map((t, i) => (
          <TabBox key={t.title} $active={t.active}>
            <TabIcon>{t.icon}</TabIcon>
            <TabTitle $fade={t.fade} $narrow={t.active}>{t.title}</TabTitle>
            <TabClose><X size={16} strokeWidth={2.6} /></TabClose>
            <TabDivider $hidden={i >= 4} />
          </TabBox>
        ))}
        <NewTab><Plus size={19} strokeWidth={2.5} /></NewTab>
        <WindowButtons>
          <svg viewBox="0 0 17 17"><path d="M2 7.500h13" stroke="#fff" strokeWidth="1.200" /></svg>
          <svg viewBox="0 0 17 17" fill="none" stroke="#fff" strokeWidth="1.200"><rect x="2.500" y="4.500" width="10" height="10.500" rx="2" /><path d="M5 2.500h7q3 0 3 3v7" /></svg>
          <svg viewBox="0 0 17 17"><path d="M2 2l13 13M15 2L2 15" stroke="#fff" strokeWidth="1.200" /></svg>
        </WindowButtons>
      </TabStrip>
      <ToolbarWrap>
        <Toolbar>
          <NavButtons>
            <ArrowLeft size={20} strokeWidth={2.5} /><ArrowRight size={20} strokeWidth={2.5} color="#8b979d" /><RotateCw size={18} strokeWidth={2.8} />
          </NavButtons>
          <Omnibox>
            <InfoBadge><Info size={18} strokeWidth={2.4} /></InfoBadge>
            <Url><b>localhost</b>:5173/home</Url>
            <OmniIcons><PinIcon /><Star size={20} /></OmniIcons>
          </Omnibox>
          <ToolIcons>
            <DropperIcon />
            <svg width="24" height="24" viewBox="0 0 24 24" fill="none" stroke="#fff" strokeWidth="2.300" style={{ marginLeft: 22 }}>
              <path d="M3 5.500q0-1 1-1h4.500a2.500 2.500 0 0 1 5 0H18q1 0 1 1V10a2.500 2.500 0 0 1 0 5v5.500q0 1-1 1H4q-1 0-1-1V16a3 3 0 0 0 0-6z" />
            </svg>
            <ToolDivider />
            <DownloadIcon />
            <svg width="26" height="26" style={{ marginLeft: 22 }}><Avatar /></svg>
            <svg width="6" height="20" viewBox="0 0 6 20" fill="#fff" style={{ marginLeft: 28 }}><circle cx="3" cy="2.500" r="2" /><circle cx="3" cy="10" r="2" /><circle cx="3" cy="17.500" r="2" /></svg>
          </ToolIcons>
        </Toolbar>
      </ToolbarWrap>

      <Header>
        <Brand>Lost &amp; Found</Brand>
        <Nav>{["Home", "Lost Items", "Found Items", "Login"].map((l) => <NavLink key={l}>{l}</NavLink>)}</Nav>
      </Header>
      <Hero>
        <Headline>Find &amp; Recover with ease</Headline>
        <MapShadow>
          <MapCard>
            <CityMap />
            <ZoomControl>
              <ZoomButton><svg width="18" height="18" stroke="#000" strokeWidth="2.300"><path d="M1 9.500h16M9 2v15" /></svg></ZoomButton>
              <ZoomButton $last><svg width="18" height="18" stroke="#000" strokeWidth="2.300"><path d="M1 9h16" /></svg></ZoomButton>
            </ZoomControl>
          </MapCard>
        </MapShadow>
      </Hero>
      <Footer>{["About Us", "License", "Contribute", "Contact Us"].map((l) => <FooterLink key={l}>{l}</FooterLink>)}</Footer>

      <Taskbar>
        <Weather><WeatherIcon /><div>83°F<Dim>Haze</Dim></div></Weather>
        <StartIcon />
        <SearchPill><Search size={20} strokeWidth={2.2} /><SearchText>Search</SearchText><PolarBear /></SearchPill>
        {apps.map((a) => (
          <AppSlot key={a.name} $open={a.state === "active"}>
            <AppIcon viewBox="0 0 40 40">{a.art}</AppIcon>
            <Indicator $kind={a.state} />
          </AppSlot>
        ))}
        <Tray>
          <ChevronUp size={20} strokeWidth={2.2} />
          <svg width="22" height="16" viewBox="0 0 22 16" style={{ marginLeft: 19 }}><path d="M3 11a5 5 0 0 1 3-8a6 6 0 0 1 11 2a4.500 4.500 0 0 1 3 6z" fill="#a9b0b4" /><path d="M4 15a4 4 0 0 1 1-7.500L10 6l6 3a3.500 3.500 0 0 1 3 6z" fill="#fff" /></svg>
          <TrayText $align="center" $m="0 21px 0 22px">ENG<br />IN</TrayText>
          <Wifi size={22} />
          <Volume2 size={20} strokeWidth={1.7} style={{ marginLeft: 8 }} />
          <svg width="22" height="16" viewBox="0 0 22 16" fill="none" stroke="#fff" strokeWidth="1.600" style={{ marginLeft: 10 }}><rect x="1" y="2" width="17" height="12" rx="3" /><path d="M20 6.500v3" strokeWidth="2.500" /><path d="M4.500 5v6" strokeWidth="2.500" /></svg>
          <TrayText $align="right" $m="0 10px 0 20px">19:28<br />27-02-2025</TrayText>
          <svg width="20" height="22" viewBox="0 0 20 22"><path d="M1 17l2-3V8a6.500 6.500 0 0 1 13 0v6l2 3zM6.500 18.500h6a3 3 0 0 1-6 0z" fill="#fff" /><text x="6" y="14.500" fontSize="9.500" fontWeight="700" fill="#142a33">z</text><text x="12" y="9" fontSize="11" fontWeight="700" fill="#fff" stroke="#142a33" strokeWidth="2" paintOrder="stroke">z</text></svg>
        </Tray>
      </Taskbar>
    </Screen>
  );
}
